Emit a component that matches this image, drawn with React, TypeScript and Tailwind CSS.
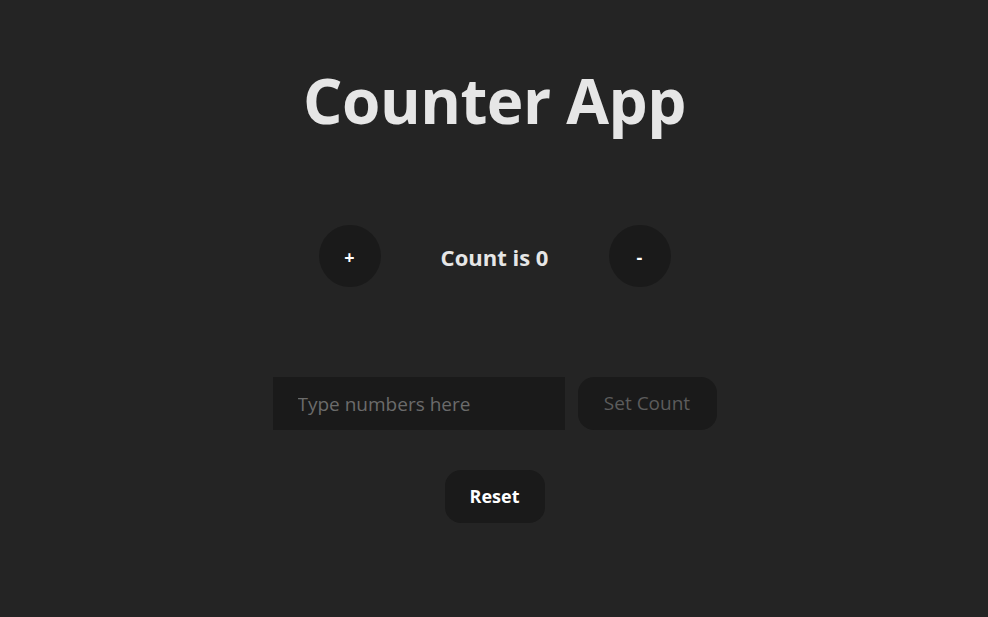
import React, { useState } from "react";

export default function App() {
  const [count, setCount] = useState(0);
  const [val, setVal] = useState("");
  const font = { fontFamily: '"Open Sans", "Noto Sans", sans-serif' };
  return (
    <div
      className="min-h-[617px] w-full bg-[#242424] flex flex-col items-center pl-[1px] text-[#e6e6e6]"
      style={font}
    >
      <h1 className="mt-[64px] text-[62px] font-bold leading-[72px] tracking-[-0.5px] text-[#e6e6e6]">
        Counter App
      </h1>
      <div className="mt-[89px] flex items-center gap-[55px]">
        <button
          onClick={() => setCount(count + 1)}
          className="w-[62px] h-[62px] rounded-full bg-[#1a1a1a] pt-[2px] text-white text-[18px] font-bold flex items-center justify-center"
        >
          +
        </button>
        <span className="pt-[2px] text-[22px] font-bold text-[#e6e6e6] w-[118px] text-center whitespace-nowrap">
          Count is {count}
        </span>
        <button
          onClick={() => setCount(count - 1)}
          className="w-[62px] h-[62px] rounded-full bg-[#1a1a1a] pt-[2px] text-white text-[18px] font-bold flex items-center justify-center"
        >
          -
        </button>
      </div>
      <div className="mt-[90px] flex items-center gap-[13px]">
        <input
          value={val}
          onChange={(e) => setVal(e.target.value)}
          placeholder="Type numbers here"
          className="w-[292px] h-[53px] bg-[#1a1a1a] pl-[25px] text-[19px] text-white placeholder:text-[#6b6b6b] outline-none"
          style={font}
        />
        <button
          disabled
          className="w-[139px] h-[53px] rounded-[16px] bg-[#1a1a1a] text-[19px] font-medium text-[#5c5c5c]"
        >
          Set Count
        </button>
      </div>
      <button
        onClick={() => setCount(0)}
        className="mt-[40px] w-[100px] h-[53px] rounded-[16px] bg-[#1a1a1a] text-[18px] font-bold text-white"
      >
        Reset
      </button>
    </div>
  );
}
